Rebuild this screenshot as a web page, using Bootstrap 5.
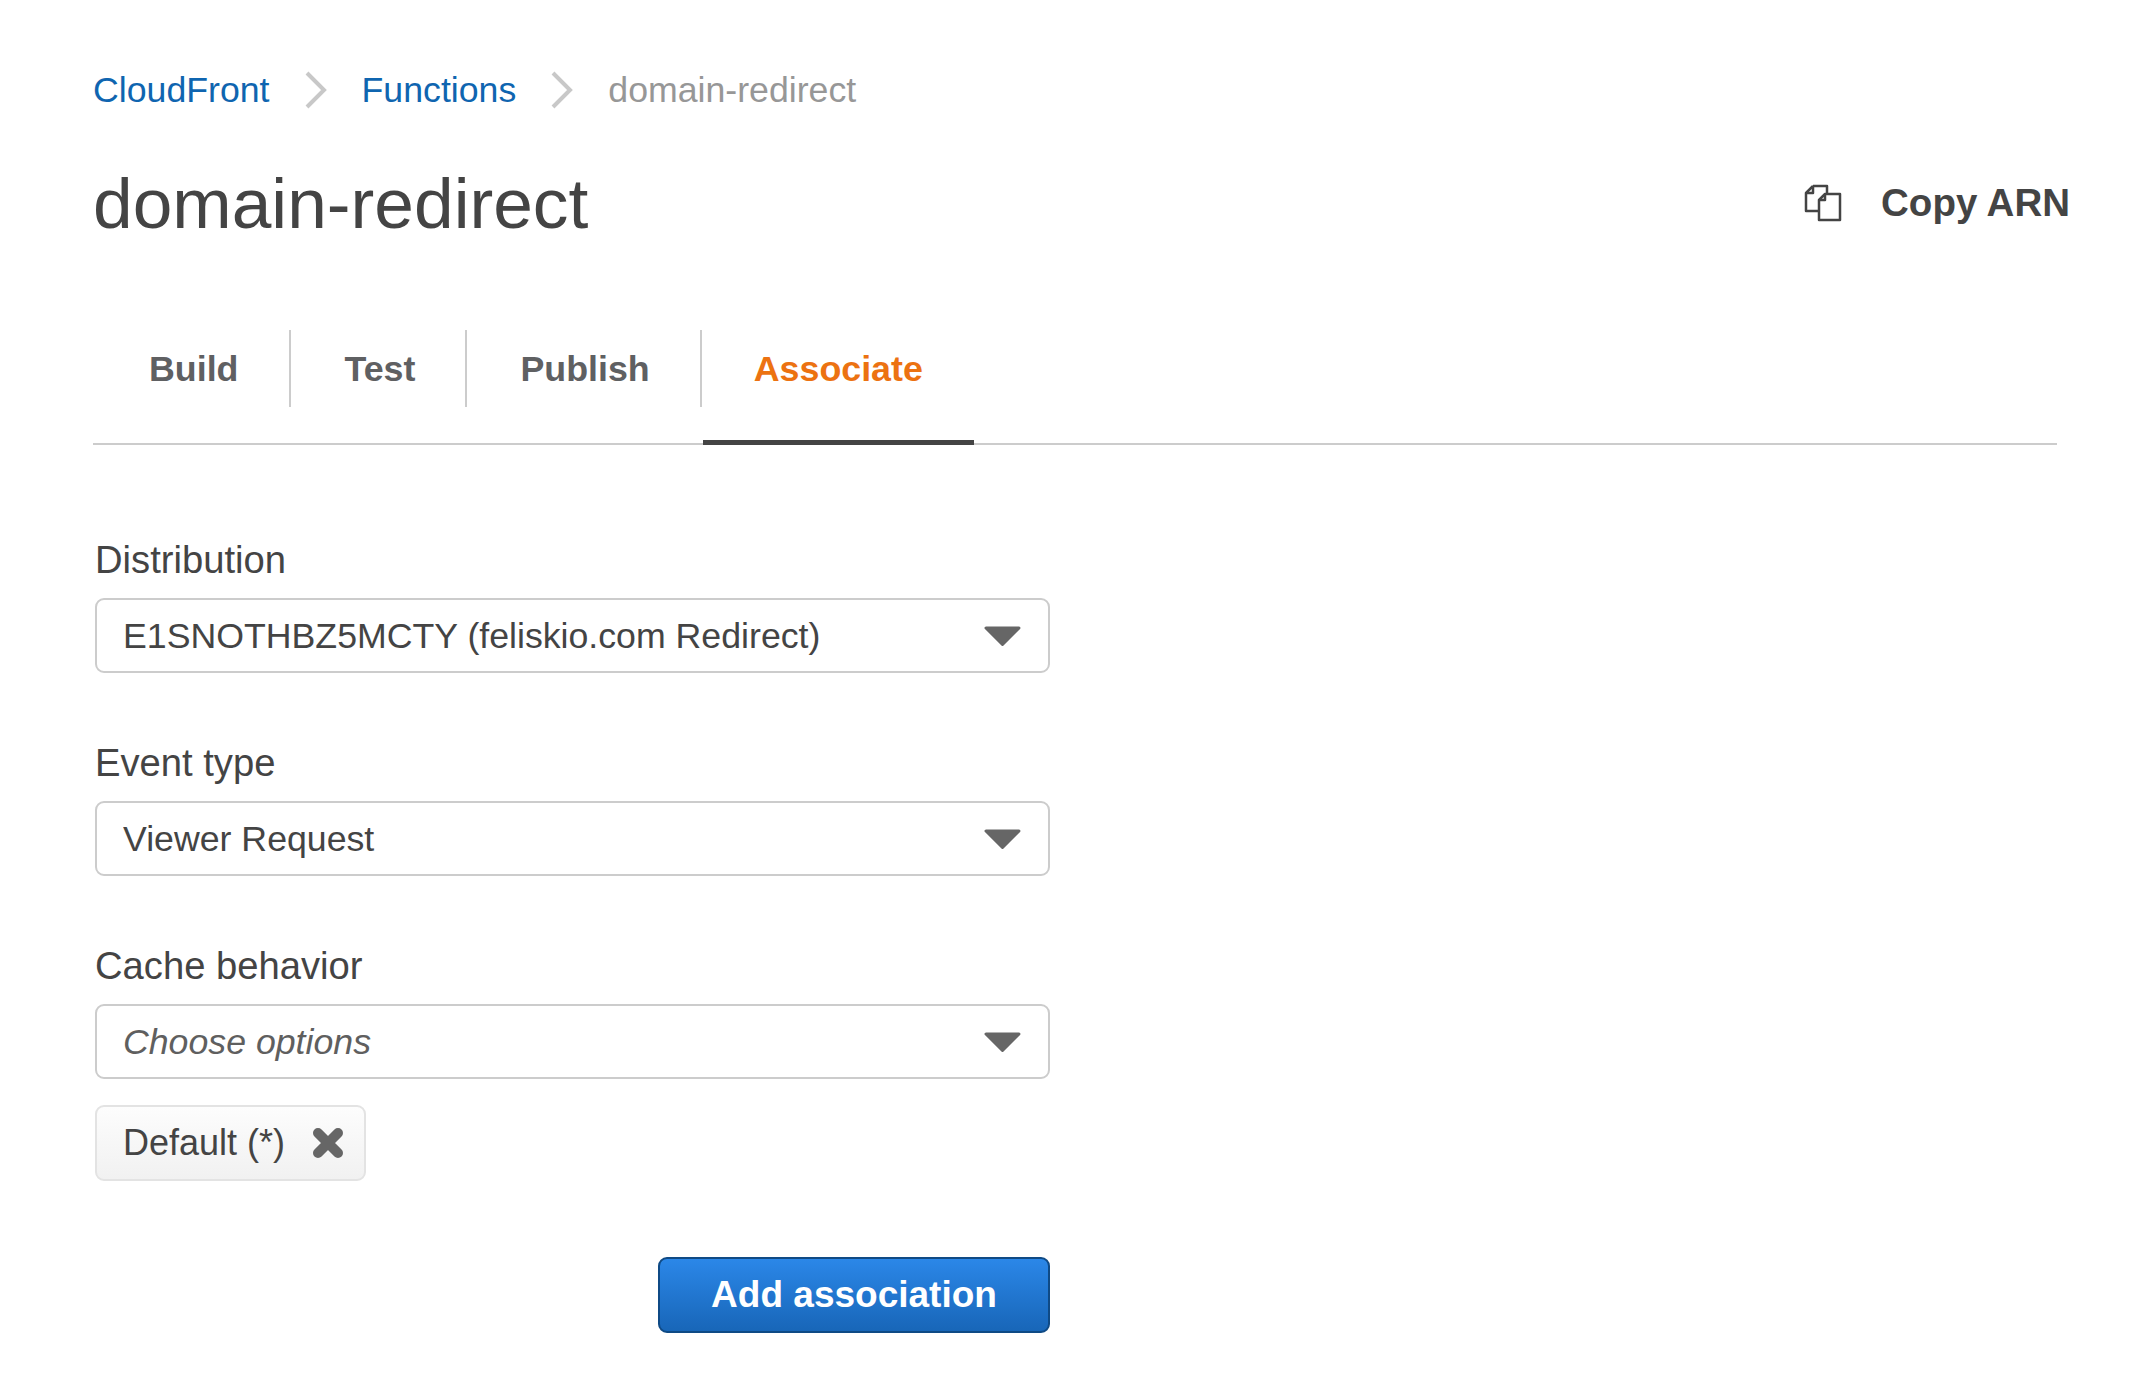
<!DOCTYPE html>
<html lang="en">
<head>
<meta charset="utf-8">
<title>domain-redirect</title>
<link href="https://cdn.jsdelivr.net/npm/bootstrap@5.3.0/dist/css/bootstrap.min.css" rel="stylesheet">
<style>
html,body{height:100%}
body{font-family:"Liberation Sans",Arial,sans-serif;color:#444;background:#fff;overflow:hidden}
.page-wrap{padding:65px 71px 0 93px}
.crumbs{margin:0;font-size:35.7px;line-height:50px;--bs-breadcrumb-margin-bottom:0;align-items:center}
.crumbs a{color:#0f65b0;text-decoration:none}
.crumbs .crumb-now{color:#979797}
.crumbs svg{display:block;width:24px;height:38px;margin:0 34px 0 34px}
.crumb-row{display:flex;align-items:center}
.title-row{margin-top:41px;height:94px}
.page-title{font-size:71.3px;line-height:94px;font-weight:400;margin:0;color:#444}
.copy-arn{font-size:38.5px;font-weight:700;color:#444;padding:0;border:0;gap:39px;background:none}
.copy-arn svg{width:38px;height:38px}
.tab-strip{margin:80px 13px 0 0;border-bottom:2px solid #ccc;height:115px;flex-wrap:nowrap}
.tab-strip .nav-link{color:#5f6062;font-size:35.8px;line-height:42px;font-weight:700;padding:0 50px 38px 53px;height:115px;display:flex;align-items:center;border-radius:0}
.tab-strip .nav-item:first-child .nav-link{padding:0 51px 38px 56px}
.tab-sep{width:2px;height:77px;background:#ccc;flex:none}
.tab-strip .nav-link.active-tab{color:#ec7211;border-bottom:5px solid #444;margin:0 0 0 1px;height:115px;padding:0 51px 33px 51px}
.form-area{width:955px;margin:92px 0 0 2px}
.field-label{display:block;font-size:38.2px;line-height:46px;margin:0 0 15px;color:#444}
.field-group{margin-bottom:67px}
.field-group.field-last{margin-bottom:0}
.aws-select{height:75px;font-size:35.7px;line-height:44px;color:#444;border:2px solid #ccc;border-radius:9px;padding:0 60px 0 26px;background-size:37px 20px;background-position:right 27px center;background-image:url("data:image/svg+xml,%3Csvg xmlns='http://www.w3.org/2000/svg' viewBox='0 0 37 20'%3E%3Cpath d='M2 2h33L18.500 18.500z' fill='%23666' stroke='%23666' stroke-width='3' stroke-linejoin='round'/%3E%3C/svg%3E")}
.aws-select.is-empty{font-style:italic;color:#5f5f5f}
.chip{display:inline-flex;align-items:center;height:76px;width:271px;margin-top:26px;padding:0 20px 0 26px;font-size:36px;color:#444;border:2px solid #e3e3e3;border-radius:9px;background:linear-gradient(#fdfdfd,#f1f1f1);justify-content:space-between}
.chip svg{width:32px;height:32px;flex:none}
.submit-row{margin-top:76px}
.btn-add{width:392px;height:76px;padding:0;font-size:37px;font-weight:700;color:#fff;background:linear-gradient(#2b87e8,#1866b8);border:2px solid #0f4a85;border-radius:9px}
</style>
</head>
<body>
<div class="page-wrap">
  <nav aria-label="breadcrumb">
    <ol class="breadcrumb crumbs">
      <li class="crumb-row"><a href="#">CloudFront</a><svg viewBox="0 0 24 38"><path d="M3 2l17 17L3 36" fill="none" stroke="#c8c8c8" stroke-width="4"/></svg></li>
      <li class="crumb-row"><a href="#">Functions</a><svg viewBox="0 0 24 38"><path d="M3 2l17 17L3 36" fill="none" stroke="#c8c8c8" stroke-width="4"/></svg></li>
      <li class="crumb-row crumb-now" aria-current="page">domain-redirect</li>
    </ol>
  </nav>
  <div class="d-flex justify-content-between align-items-center title-row">
    <h1 class="page-title">domain-redirect</h1>
    <button type="button" class="btn d-flex align-items-center copy-arn">
      <svg viewBox="0 0 38 38" fill="none" stroke="#444" stroke-width="2.500" stroke-linejoin="round"><path d="M9 2h14v7M9 2L2 9v18h12"/><path d="M9 2v7H2"/><path d="M21 10h15v26H15V16z"/><path d="M21 10v6h-6"/></svg>
      <span>Copy ARN</span>
    </button>
  </div>
  <ul class="nav tab-strip">
    <li class="nav-item"><a class="nav-link" href="#">Build</a></li>
    <li class="tab-sep" aria-hidden="true"></li>
    <li class="nav-item"><a class="nav-link" href="#">Test</a></li>
    <li class="tab-sep" aria-hidden="true"></li>
    <li class="nav-item"><a class="nav-link" href="#">Publish</a></li>
    <li class="tab-sep" aria-hidden="true"></li>
    <li class="nav-item"><a class="nav-link active-tab" href="#">Associate</a></li>
  </ul>
  <form class="form-area">
    <div class="field-group">
      <label class="field-label" for="f1">Distribution</label>
      <select id="f1" class="form-select aws-select"><option>E1SNOTHBZ5MCTY (feliskio.com Redirect)</option></select>
    </div>
    <div class="field-group">
      <label class="field-label" for="f2">Event type</label>
      <select id="f2" class="form-select aws-select"><option>Viewer Request</option></select>
    </div>
    <div class="field-group field-last">
      <label class="field-label" for="f3">Cache behavior</label>
      <select id="f3" class="form-select aws-select is-empty"><option>Choose options</option></select>
      <div class="chip"><span>Default (*)</span>
        <svg viewBox="0 0 32 32"><path d="M6 6l20 20M26 6L6 26" stroke="#666" stroke-width="10" stroke-linecap="round" fill="none"/></svg>
      </div>
    </div>
    <div class="d-flex justify-content-end submit-row">
      <button type="button" class="btn btn-primary btn-add">Add association</button>
    </div>
  </form>
</div>
<script src="https://cdn.jsdelivr.net/npm/bootstrap@5.3.0/dist/js/bootstrap.bundle.min.js"></script>
</body>
</html>
